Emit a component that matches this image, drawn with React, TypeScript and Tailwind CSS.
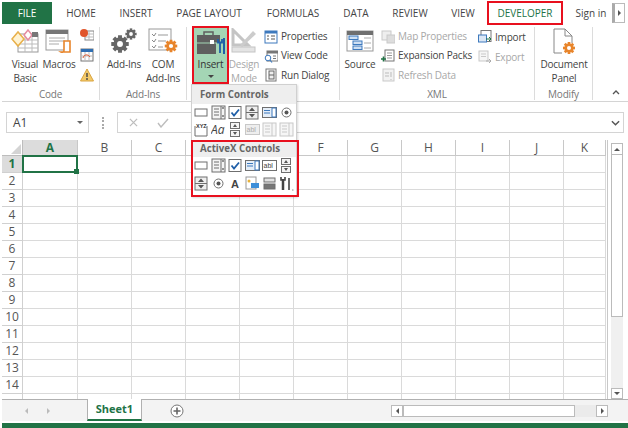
const GREEN = "#217346";

const tabs = [
  { label: "HOME", cls: "w-[58px]" },
  { label: "INSERT", cls: "w-[52px]" },
  { label: "PAGE LAYOUT", cls: "w-[94px]" },
  { label: "FORMULAS", cls: "w-[74px]" },
  { label: "DATA", cls: "w-[52px]" },
  { label: "REVIEW", cls: "w-[56px]" },
  { label: "VIEW", cls: "w-[50px]" },
];

// D and E sit under the open Insert menu, so their letters never show
const columns = ["A", "B", "C", "", " ", "F", "G", "H", "I", "J", "K"];
const rows = Array.from({ length: 14 }, (_, i) => i + 1);

function VisualBasicIcon() {
  return (
    <svg viewBox="0 0 28 24" className="h-[24px] w-[28px]">
      <rect x="7" y="5" width="20" height="18" fill="#fff" stroke="#999" />
      <path d="M7 11h20M7 15h20M7 19h20M14 5v18M21 5v18" stroke="#bbb" />
      <path d="M1 10l6-7 6 7-6 7z" fill="#fff3d2" stroke="#e8b04a" strokeWidth="1.5" />
      <path d="M13 6l4-5 4 5-4 5z" fill="#fff" stroke="#e58ba0" strokeWidth="1.5" />
      <rect x="21" y="3" width="6" height="5" fill="#777" />
    </svg>
  );
}

function MacrosIcon() {
  return (
    <svg viewBox="0 0 28 26" className="h-[26px] w-[28px]">
      <rect x="1" y="2" width="22" height="20" fill="#fff" stroke="#999" />
      <rect x="1" y="2" width="22" height="4" fill="#777" />
      <path d="M4 10h16M4 13h16M4 16h10" stroke="#aaa" />
      <path d="M16 24h9V13h-6v9a2 2 0 0 1-3 2z" fill="#fff" stroke="#e8852b" strokeWidth="1.6" />
    </svg>
  );
}

function Gear({ cx, cy, r, fill }: { cx: number; cy: number; r: number; fill: string }) {
  const teeth = [0, 45, 90, 135];
  return (
    <g>
      {teeth.map((a) => (
        <rect
          key={a}
          x={cx - r * 0.28}
          y={cy - r * 1.25}
          width={r * 0.56}
          height={r * 2.5}
          fill={fill}
          transform={`rotate(${a} ${cx} ${cy})`}
        />
      ))}
      <circle cx={cx} cy={cy} r={r * 0.95} fill={fill} />
      <circle cx={cx} cy={cy} r={r * 0.42} fill="#fff" />
    </g>
  );
}

function AddInsIcon() {
  return (
    <svg viewBox="0 0 26 26" className="h-[26px] w-[26px]">
      <Gear cx={9} cy={16} r={7} fill="#666" />
      <Gear cx={20} cy={6} r={4.5} fill="#666" />
    </svg>
  );
}

function ComAddInsIcon() {
  return (
    <svg viewBox="0 0 30 26" className="h-[26px] w-[30px]">
      <rect x="1" y="1" width="22" height="21" fill="#fff" stroke="#999" />
      <path d="M4 6l2 2 2-3M4 12l2 2 2-3M4 18l2 2 2-3" stroke="#888" fill="none" />
      <path d="M10 7h10M10 13h8M10 19h5" stroke="#999" />
      <Gear cx={23} cy={18} r={5} fill="#e8852b" />
    </svg>
  );
}

function InsertIcon() {
  return (
    <svg viewBox="0 0 28 24" className="h-[24px] w-[28px]">
      <path d="M7 5V2h9v3" fill="none" stroke="#5f5f5f" strokeWidth="1.500" />
      <path d="M0 5h23v7.500H0z" fill="#5f5f5f" />
      <path d="M0 13.500h19V24H0z" fill="#5f5f5f" />
      <rect x="13" y="10" width="4" height="4" fill="#fff" />
      <path d="M21 9v3.500h4V9M23 12v11" stroke="#1f5fa8" strokeWidth="1.800" fill="none" />
      <path d="M21 23h0" stroke="#1f5fa8" />
      <path d="M27 8v16" stroke="#1f5fa8" strokeWidth="2" />
    </svg>
  );
}

function DesignIcon() {
  return (
    <svg viewBox="0 0 26 25" className="h-[25px] w-[26px]">
      <path d="M2 2l15 15H2z" fill="none" stroke="#c4c4c4" strokeWidth="3" />
      <path d="M9 17L22 3l3 3-14 13z" fill="#ccc" />
      <rect x="1" y="19" width="23" height="5" fill="#e4e4e4" stroke="#c4c4c4" />
    </svg>
  );
}

function SourceIcon() {
  return (
    <svg viewBox="0 0 28 22" className="h-[22px] w-[28px]">
      <rect x="1" y="1" width="26" height="20" fill="#fff" stroke="#999" />
      <rect x="1" y="1" width="26" height="4" fill="#6f6f6f" />
      <rect x="3" y="6" width="9" height="3.500" fill="#cfe0f3" stroke="#3d79bd" />
      <rect x="7" y="11" width="9" height="3.500" fill="#cfe0f3" stroke="#3d79bd" />
      <rect x="7" y="16" width="9" height="3.500" fill="#cfe0f3" stroke="#3d79bd" />
      <path d="M18 8h7M18 13h7M18 18h7" stroke="#aaa" />
    </svg>
  );
}

function DocPanelIcon() {
  return (
    <svg viewBox="0 0 26 26" className="h-[26px] w-[26px]">
      <path d="M3 25V1h11l7 7v7M3 25h8" fill="#fff" stroke="#888" />
      <path d="M14 1v7h7" fill="none" stroke="#888" />
      <Gear cx={18} cy={20} r={4.800} fill="#e8852b" />
    </svg>
  );
}

function SmallIcon({ kind }: { kind: string }) {
  const grey = "#c9c9c9";
  return (
    <svg viewBox="0 0 14 14" className="h-[14px] w-[14px] shrink-0">
      {kind === "record" && (
        <g>
          <rect x="5" y="3" width="9" height="9" fill="#fff" stroke="#888" />
          <path d="M5 6h9M5 9h9M9 3v9" stroke="#bbb" />
          <circle cx="4" cy="5" r="4" fill="#e0552b" />
        </g>
      )}
      {kind === "relative" && (
        <g>
          <rect x="1" y="1" width="12" height="12" fill="#fff" stroke="#777" />
          <rect x="1" y="1" width="12" height="3" fill="#2f6fb3" />
          <path d="M1 8h12M5 4v9M9 4v9" stroke="#bbb" />
          <path d="M3 10c1-4 5-4 7-1" stroke="#e0552b" fill="none" />
        </g>
      )}
      {kind === "warn" && (
        <g>
          <path d="M7 1l6.500 12H.5z" fill="#f3c969" stroke="#d9a441" />
          <path d="M7 5v4M7 10v2" stroke="#444" strokeWidth="1.400" />
        </g>
      )}
      {kind === "props" && (
        <g>
          <rect x="1" y="1" width="12" height="12" fill="#fff" stroke="#3d79bd" />
          <rect x="1" y="1" width="12" height="2.500" fill="#3d79bd" />
          <path d="M3 6h2M3 9h2M7 6h4M7 9h4" stroke="#555" />
        </g>
      )}
      {kind === "code" && (
        <g>
          <rect x="3" y="2" width="11" height="10" fill="#fff" stroke="#777" />
          <rect x="3" y="2" width="11" height="2.500" fill="#777" />
          <path d="M9 7h3M9 9.500h3" stroke="#777" />
          <circle cx="4" cy="9" r="2.800" fill="#fff" stroke="#3d79bd" />
          <path d="M6 11l2 2.500" stroke="#3d79bd" strokeWidth="1.200" />
        </g>
      )}
      {kind === "dialog" && (
        <g>
          <rect x="2" y="1" width="10" height="12" fill="#fff" stroke="#777" />
          <rect x="5" y="3" width="5" height="8" fill="#eee" stroke="#666" />
          <path d="M5 7h5" stroke="#666" />
        </g>
      )}
      {kind === "map" && (
        <g>
          <rect x="1" y="1" width="9" height="9" fill="#eee" stroke={grey} />
          <rect x="6" y="5" width="8" height="8" fill="#ddd" stroke={grey} />
        </g>
      )}
      {kind === "packs" && (
        <g>
          <rect x="4" y="1" width="9" height="11" fill="#fff" stroke="#777" />
          <path d="M6 4h5M6 6.500h5M6 9h5" stroke="#999" />
          <path d="M0 10h5M2.500 7.500v5" stroke={GREEN} strokeWidth="1.600" />
        </g>
      )}
      {kind === "refresh" && (
        <g>
          <rect x="2" y="1" width="11" height="12" fill="#f2f2f2" stroke={grey} />
          <path d="M4 5h4M4 8h4M10 4v5M10 11v1" stroke="#bbb" />
        </g>
      )}
      {kind === "import" && (
        <g>
          <rect x="3" y="0.500" width="10" height="11" fill="#fff" stroke="#777" />
          <rect x="0.500" y="5" width="8" height="7" fill="#dbe7f5" stroke="#3d79bd" />
          <path d="M8 9l5 0M11 7l2 2-2 2" stroke={GREEN} fill="none" />
        </g>
      )}
      {kind === "export" && (
        <g>
          <rect x="1" y="1" width="9" height="10" fill="#f6f6f6" stroke={grey} />
          <path d="M3 4h5M3 6.500h5" stroke={grey} />
          <path d="M8 11h5M11 9l2 2-2 2" stroke="#aaa" fill="none" />
        </g>
      )}
    </svg>
  );
}

function LargeButton({
  icon,
  lines,
  className = "",
  muted = false,
}: {
  icon: React.ReactNode;
  lines: string[];
  className?: string;
  muted?: boolean;
}) {
  return (
    <div className={`flex shrink-0 flex-col items-center ${className}`}>
      <div className="flex h-[27px] shrink-0 items-center justify-center">{icon}</div>
      <div className={`mt-[3px] whitespace-nowrap text-center leading-[14px] ${muted ? "text-[#a8a8a8]" : "text-[#444]"}`}>
        {lines.map((l) => (
          <div key={l}>{l}</div>
        ))}
      </div>
    </div>
  );
}

function SmallRow({ kind, label, muted = false }: { kind: string; label: string; muted?: boolean }) {
  return (
    <div className={`flex h-[20px] items-center gap-[3px] ${muted ? "text-[#a8a8a8]" : "text-[#444]"}`}>
      <SmallIcon kind={kind} />
      <span className="whitespace-nowrap">{label}</span>
    </div>
  );
}

function RibbonGroup({
  label,
  className,
  children,
}: {
  label: string;
  className: string;
  children: React.ReactNode;
}) {
  return (
    <div className={`flex h-[73px] shrink-0 flex-col border-r border-[#dcdcdc] ${className}`}>
      <div className="flex h-[58px] shrink-0">{children}</div>
      <div className="mt-[3px] text-center leading-[12px] text-[#777]">{label}</div>
    </div>
  );
}

function Ctl({ kind }: { kind: string }) {
  const b = "#6f6f6f";
  const l = "#c8c8c8";
  return (
    <svg viewBox="0 0 15 15" className="h-[15px] w-[15px]">
      {kind === "button" && <rect x="1" y="4" width="12" height="7" fill="#fff" stroke={b} />}
      {kind === "combo" && (
        <g>
          <rect x="1" y="1" width="13" height="13" fill="#f4f4f4" stroke={b} />
          <path d="M10 1v13M3 4h5M3 7h5M3 10h5" stroke={b} />
          <path d="M11 3h2M11 11h2" stroke="#333" />
        </g>
      )}
      {kind === "check" && (
        <g>
          <rect x="1" y="1.500" width="12" height="12" fill="#fff" stroke={b} />
          <path d="M3.500 7.500l2.500 3 5-6" stroke="#1f5fa8" strokeWidth="1.800" fill="none" />
        </g>
      )}
      {kind === "spin" && (
        <g>
          <rect x="1" y="1" width="12" height="13" fill="#eee" stroke={b} />
          <path d="M7 2.500l3 3.500H4zM7 12.500L4 9h6z" fill="#555" />
          <path d="M1 7.500h12" stroke={b} />
        </g>
      )}
      {kind === "list" && (
        <g>
          <rect x="0.500" y="2.500" width="14" height="10" fill="#e5eef8" stroke={b} />
          <rect x="10" y="3" width="4" height="9" fill="#fff" stroke="#3d79bd" />
          <path d="M2 5.500h6M2 8h6" stroke="#3d79bd" />
        </g>
      )}
      {kind === "radio" && (
        <g>
          <circle cx="7.500" cy="7.500" r="4.500" fill="#fff" stroke={b} />
          <circle cx="7.500" cy="7.500" r="2" fill="#555" />
        </g>
      )}
      {kind === "group" && (
        <g>
          <path d="M1 4v10h12V4" fill="none" stroke={b} />
          <text x="2" y="5.500" fontSize="5.500" fontWeight="700" fill="#333" fontFamily="Liberation Sans, sans-serif">
            XYZ
          </text>
        </g>
      )}
      {kind === "aa" && (
        <text x="0" y="12" fontSize="12" fontStyle="italic" fill="#444" fontFamily="Open Sans, sans-serif">
          Aa
        </text>
      )}
      {kind === "scroll" && (
        <g>
          <rect x="2.500" y="0.500" width="9" height="6" fill="#f4f4f4" stroke={b} />
          <rect x="2.500" y="8.500" width="9" height="6" fill="#f4f4f4" stroke={b} />
          <path d="M7 2l2 3H5zM7 13l-2-3h4z" fill="#555" />
        </g>
      )}
      {kind === "abl" && (
        <g>
          <rect x="0.500" y="2.500" width="14" height="10" fill="#fff" stroke={b} />
          <text x="1.500" y="10" fontSize="7" fill="#444" fontFamily="Liberation Sans, sans-serif">
            abl
          </text>
        </g>
      )}
      {kind === "ablOff" && (
        <g>
          <rect x="0.500" y="2.500" width="14" height="10" fill="#eee" stroke={l} />
          <text x="1.500" y="10" fontSize="7" fill="#aaa" fontFamily="Liberation Sans, sans-serif">
            abl
          </text>
        </g>
      )}
      {kind === "comboOff" && (
        <g>
          <rect x="1" y="1" width="13" height="13" fill="#f6f6f6" stroke={l} />
          <path d="M10 1v13M3 4h5M3 7h5M3 10h5" stroke={l} />
        </g>
      )}
      {kind === "a" && (
        <text x="3" y="12" fontSize="11" fontWeight="700" fill="#444" fontFamily="Liberation Sans, sans-serif">
          A
        </text>
      )}
      {kind === "image" && (
        <g>
          <rect x="1" y="1" width="10" height="12" fill="#fff" stroke="#999" />
          <circle cx="4" cy="5" r="1.500" fill="#e8b23a" />
          <rect x="6" y="7" width="8" height="5" fill="#3d8fd9" />
        </g>
      )}
      {kind === "toggle" && (
        <g>
          <rect x="2" y="2" width="11" height="4" fill="#e2e2e2" stroke={b} />
          <rect x="2" y="8" width="11" height="5" fill="#777" stroke={b} />
        </g>
      )}
      {kind === "tools" && (
        <g>
          <path d="M4 3v11" stroke="#444" strokeWidth="2.500" />
          <path d="M2 1v3h4V1M10 2v12" stroke="#444" strokeWidth="1.600" fill="none" />
          <path d="M13 14h1.500" stroke="#888" />
        </g>
      )}
    </svg>
  );
}

function CtlRow({ kinds }: { kinds: string[] }) {
  return (
    <div className="flex h-[17px] items-center gap-[2px] pl-[2px]">
      {kinds.map((k, i) => (
        <Ctl key={`${k}-${i}`} kind={k} />
      ))}
    </div>
  );
}

function InsertMenu() {
  return (
    <div className="absolute left-[191px] top-[84px] z-20 h-[113px] w-[106px] border border-[#d0d0d0] bg-white text-[9.7px] shadow-[1px_1px_2px_rgba(0,0,0,0.15)]">
      <div className="h-[19px] bg-[#eeeeee] pl-[8px] font-bold leading-[19px] text-[#666]">Form Controls</div>
      <div className="flex flex-col">
        <CtlRow kinds={["button", "combo", "check", "spin", "list", "radio"]} />
        <CtlRow kinds={["group", "aa", "scroll", "ablOff", "comboOff", "comboOff"]} />
      </div>
      <div className="mt-[2px] h-[17px] bg-[#eeeeee] pl-[8px] font-bold leading-[17px] text-[#666]">ActiveX Controls</div>
      <div className="flex flex-col">
        <CtlRow kinds={["button", "combo", "check", "list", "abl", "scroll"]} />
        <div className="mt-[1px]">
          <CtlRow kinds={["spin", "radio", "a", "image", "toggle", "tools"]} />
        </div>
      </div>
    </div>
  );
}

function Ribbon() {
  return (
    <div className="flex h-[78px] border-b border-[#d4d4d4] pt-[3px] text-[10px] tracking-[-0.2px]">
      <RibbonGroup label="Code" className="w-[98px]">
        <LargeButton icon={<VisualBasicIcon />} lines={["Visual", "Basic"]} className="w-[46px]" />
        <LargeButton icon={<MacrosIcon />} lines={["Macros"]} className="-ml-[4px] w-[30px]" />
        <div className="ml-[3px] flex w-[20px] flex-col items-center gap-[6px] pt-[1px]">
          <SmallIcon kind="record" />
          <SmallIcon kind="relative" />
          <SmallIcon kind="warn" />
        </div>
      </RibbonGroup>
      <RibbonGroup label="Add-Ins" className="w-[87px]">
        <LargeButton icon={<AddInsIcon />} lines={["Add-Ins"]} className="ml-[4px] w-[40px]" />
        <LargeButton icon={<ComAddInsIcon />} lines={["COM", "Add-Ins"]} className="w-[38px]" />
      </RibbonGroup>
      <RibbonGroup label="" className="w-[153px]">
        <div className="ml-[5px] flex h-[57px] w-[37px] shrink-0 flex-col items-center bg-[#a4d5b5]">
          <div className="flex h-[27px] shrink-0 items-end justify-center">
            <InsertIcon />
          </div>
          <div className="mt-[3px] leading-[14px] text-[#333]">Insert</div>
          <div className="mt-[4px] h-0 w-0 border-x-[3px] border-t-[3px] border-x-transparent border-t-[#444]" />
        </div>
        <LargeButton icon={<DesignIcon />} lines={["Design", "Mode"]} muted className="w-[30px]" />
        <div className="ml-[5px] flex flex-col">
          <SmallRow kind="props" label="Properties" />
          <SmallRow kind="code" label="View Code" />
          <SmallRow kind="dialog" label="Run Dialog" />
        </div>
      </RibbonGroup>
      <RibbonGroup label="XML" className="w-[195px]">
        <LargeButton icon={<SourceIcon />} lines={["Source"]} className="ml-[2px] w-[36px]" />
        <div className="ml-[3px] flex w-[97px] flex-col">
          <SmallRow kind="map" label="Map Properties" muted />
          <SmallRow kind="packs" label="Expansion Packs" />
          <SmallRow kind="refresh" label="Refresh Data" muted />
        </div>
        <div className="flex flex-col">
          <SmallRow kind="import" label="Import" />
          <SmallRow kind="export" label="Export" muted />
        </div>
      </RibbonGroup>
      <RibbonGroup label="Modify" className="w-[58px]">
        <LargeButton icon={<DocPanelIcon />} lines={["Document", "Panel"]} className="w-[58px]" />
      </RibbonGroup>
      <div className="flex flex-1 items-end justify-end pb-[6px] pr-[8px]">
        <svg viewBox="0 0 8 5" className="h-[5px] w-[8px]">
          <path d="M1 4l3-3 3 3" fill="none" stroke="#555" strokeWidth="1.300" />
        </svg>
      </div>
    </div>
  );
}

function TabBar() {
  return (
    <div className="flex h-[22px] items-stretch text-[10px] text-[#444]">
      <div className="flex w-[50px] items-center justify-center bg-[#217346] font-medium text-white">FILE</div>
      {tabs.map((t) => (
        <div key={t.label} className={`flex items-center justify-center whitespace-nowrap ${t.cls}`}>
          {t.label}
        </div>
      ))}
      <div className="flex w-[74px] items-center justify-center text-[#217346] outline-2 -outline-offset-1 outline-[#e8101e]">
        DEVELOPER
      </div>
      <div className="ml-[14px] flex w-[30px] items-center justify-center whitespace-nowrap">Sign in</div>
      <div className="ml-[6px] mt-[1px] flex h-[20px] w-[13px] items-center justify-center border border-[#bbb] border-l-[3px] border-l-[#aaa] bg-white">
        <div className="h-0 w-0 border-y-[3px] border-l-[3px] border-y-transparent border-l-[#555]" />
      </div>
    </div>
  );
}

function FormulaBar() {
  return (
    <div className="flex h-[38px] items-center pl-[4px] pr-[4px] pt-[3px]">
      <div className="flex h-[21px] w-[83px] items-center justify-between border border-[#d4d4d4] pl-[6px] pr-[5px] text-[12px] text-[#444]">
        A1
        <div className="h-0 w-0 border-x-[3px] border-t-[3px] border-x-transparent border-t-[#666]" />
      </div>
      <div className="mx-[13px] h-[12px] border-l-2 border-dotted border-[#aaa]" />
      <div className="flex h-[21px] flex-1 items-center border border-[#d4d4d4]">
        <svg viewBox="0 0 10 10" className="ml-[11px] h-[9px] w-[9px]">
          <path d="M1 1l8 8M9 1l-8 8" stroke="#bdbdbd" strokeWidth="1.400" />
        </svg>
        <svg viewBox="0 0 12 10" className="ml-[19px] h-[10px] w-[12px]">
          <path d="M1 5l3 4 7-8" stroke="#bdbdbd" strokeWidth="1.400" fill="none" />
        </svg>
        <svg viewBox="0 0 10 6" className="ml-auto mr-[3px] h-[6px] w-[9px]">
          <path d="M1 1l4 4 4-4" stroke="#555" strokeWidth="1.600" fill="none" />
        </svg>
      </div>
    </div>
  );
}

function colWidth(index: number) {
  if (index === 0) return "w-[55px]";
  if (index === columns.length - 1) return "w-[42px]";
  return "w-[54px]";
}

function Grid() {
  return (
    <div className="flex">
      <div className="w-[606px] overflow-hidden border-r border-[#c8c8c8] text-[11px]">
        <div className="flex h-[16px]">
          <div className="relative w-[21px] shrink-0 border-b border-r border-[#bdbdbd]">
            <div className="absolute bottom-[1px] right-[1px] h-0 w-0 border-b-[10px] border-l-[10px] border-b-[#d4d4d4] border-l-transparent" />
          </div>
          {columns.map((c, i) => (
            <div
              key={c}
              className={`flex shrink-0 items-center justify-center border-b border-r border-[#c8c8c8] text-[12px] ${colWidth(i)} ${
                i === 0 ? "border-b-[#217346] bg-[#dcdcdc] font-bold text-[#217346]" : "text-[#555]"
              }`}
            >
              {c}
            </div>
          ))}
        </div>
        {rows.map((r) => (
          <div key={r} className="flex h-[17px]">
            <div
              className={`flex w-[21px] shrink-0 items-center justify-center border-b border-r border-[#d0d0d0] text-[12px] ${
                r === 1 ? "bg-[#dcdcdc] font-bold text-[#217346]" : "text-[#555]"
              }`}
            >
              {r}
            </div>
            {columns.map((c, i) => (
              <div key={c} className={`relative shrink-0 border-b border-r border-[#dadada] ${colWidth(i)}`}>
                {r === 1 && i === 0 && (
                  <div className="absolute -left-[1px] -top-[1px] z-10 h-[18px] w-[56px] border-2 border-[#217346]">
                    <div className="absolute -bottom-[3px] -right-[3px] h-[5px] w-[5px] bg-[#217346]" />
                  </div>
                )}
              </div>
            ))}
          </div>
        ))}
        <div className="flex h-[5px]">
          <div className="w-[21px] shrink-0 border-r border-[#d0d0d0]" />
          {columns.map((c, i) => (
            <div key={c} className={`shrink-0 border-r border-[#dadada] ${colWidth(i)}`} />
          ))}
        </div>
      </div>
      <div className="ml-[3px] mt-[3px] flex w-[12px] flex-col bg-[#f0f0f0]">
        <div className="flex h-[12px] items-center justify-center border border-[#bbb] bg-white">
          <div className="h-0 w-0 border-x-[3px] border-b-[3px] border-x-transparent border-b-[#555]" />
        </div>
        <div className="h-[162px] border-x border-b border-[#bbb] bg-white" />
        <div className="flex-1" />
        <div className="flex h-[11px] items-center justify-center border border-[#bbb] bg-white">
          <div className="h-0 w-0 border-x-[3px] border-t-[3px] border-x-transparent border-t-[#555]" />
        </div>
      </div>
    </div>
  );
}

function SheetBar() {
  return (
    <div className="flex h-[22px] items-stretch border-t border-[#b0b0b0] bg-[#f3f3f3]">
      <div className="flex w-[85px] items-center gap-[19px] pl-[23px]">
        <div className="h-0 w-0 border-y-[3px] border-r-[3px] border-y-transparent border-r-[#bbb]" />
        <div className="h-0 w-0 border-y-[3px] border-l-[3px] border-y-transparent border-l-[#bbb]" />
      </div>
      <div className="-mt-px flex w-[55px] items-center justify-center border-x border-b-2 border-x-[#b0b0b0] border-b-[#217346] bg-white text-[11px] font-bold text-[#217346]">
        Sheet1
      </div>
      <div className="ml-[28px] flex items-center">
        <svg viewBox="0 0 14 14" className="h-[14px] w-[14px]">
          <circle cx="7" cy="7" r="6" fill="#fff" stroke="#777" />
          <path d="M7 3.500v7M3.500 7h7" stroke="#666" strokeWidth="1.600" />
        </svg>
      </div>
      <div className="ml-[207px] flex w-[217px] items-center">
        <div className="flex h-[12px] w-[12px] items-center justify-center border border-[#bbb] bg-white">
          <div className="h-0 w-0 border-y-[3px] border-r-[3px] border-y-transparent border-r-[#555]" />
        </div>
        <div className="h-[12px] w-[172px] border border-[#bbb] bg-white" />
        <div className="h-[12px] flex-1 bg-[#ebebeb]" />
        <div className="flex h-[12px] w-[12px] items-center justify-center border border-[#bbb] bg-white">
          <div className="h-0 w-0 border-y-[3px] border-l-[3px] border-y-transparent border-l-[#555]" />
        </div>
      </div>
    </div>
  );
}

export default function App() {
  return (
    <div
      className="relative h-[428px] w-[628px] overflow-hidden bg-white pl-[2px] pt-[2px]"
      style={{ fontFamily: '"Open Sans", "Liberation Sans", sans-serif' }}
    >
      <TabBar />
      <Ribbon />
      <FormulaBar />
      <Grid />
      <SheetBar />
      <div className="mt-[2px] h-[5px] bg-[#217346]" />
      <InsertMenu />
      <div className="absolute left-[192px] top-[26px] z-30 h-[58px] w-[37px] border-2 border-[#e8101e]" />
      <div className="absolute left-[191px] top-[140px] z-30 h-[57px] w-[108px] border-2 border-[#e8101e]" />
    </div>
  );
}
